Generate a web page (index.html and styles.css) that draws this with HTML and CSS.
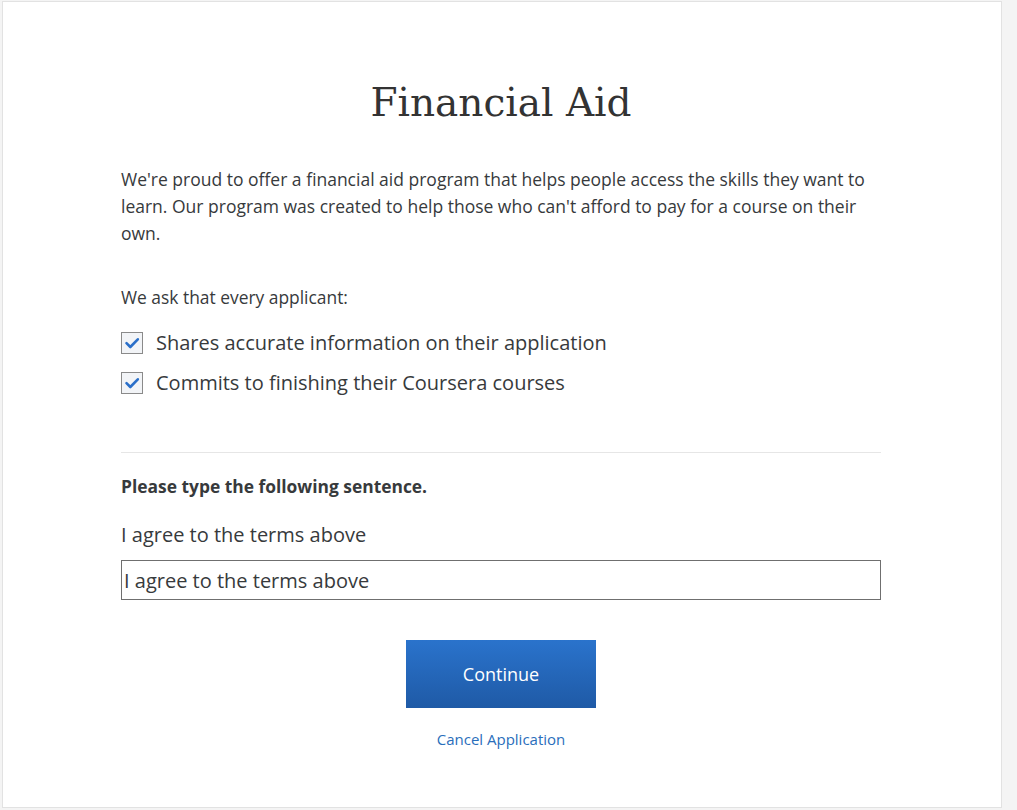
FILE: index.html
```html
<!DOCTYPE html>
<html lang="en">
<head>
<meta charset="utf-8">
<title>Financial Aid</title>
<link rel="stylesheet" href="styles.css">
</head>
<body>
<div class="page">
  <main class="card">
    <div class="content">
      <h1 class="title">Financial Aid</h1>
      <p class="intro">We're proud to offer a financial aid program that helps people access the skills they want to learn. Our program was created to help those who can't afford to pay for a course on their own.</p>
      <p class="ask">We ask that every applicant:</p>
      <ul class="checks">
        <li class="check-item">
          <span class="box"><svg viewBox="0 0 22 22" width="22" height="22"><path d="M5.5 11.2 L9.3 15 L16.8 7.3" fill="none" stroke="#2a6fc9" stroke-width="2.6" stroke-linecap="round" stroke-linejoin="round"/></svg></span>
          <span>Shares accurate information on their application</span>
        </li>
        <li class="check-item">
          <span class="box"><svg viewBox="0 0 22 22" width="22" height="22"><path d="M5.5 11.2 L9.3 15 L16.8 7.3" fill="none" stroke="#2a6fc9" stroke-width="2.6" stroke-linecap="round" stroke-linejoin="round"/></svg></span>
          <span>Commits to finishing their Coursera courses</span>
        </li>
      </ul>
      <hr class="divider">
      <p class="instruction">Please type the following sentence.</p>
      <p class="sentence">I agree to the terms above</p>
      <input class="field" type="text" value="I agree to the terms above">
      <div class="actions">
        <button class="continue" type="button">Continue</button>
        <a class="cancel" href="#">Cancel Application</a>
      </div>
    </div>
  </main>
</div>
</body>
</html>
```
FILE: styles.css
```css
html, body {
  margin: 0;
  padding: 0;
  background: #f4f4f4;
}
body {
  font-family: "Open Sans", "Liberation Sans", sans-serif;
  color: #373a3c;
}
.page {
  padding: 1px 15px 1px 2px;
  display: flex;
}
.card {
  width: 1000px;
  height: 807px;
  padding-right: 2px;
  background: #fff;
  border: 1px solid #e2e2e2;
  box-sizing: border-box;
  display: flex;
  justify-content: center;
}
.content {
  width: 760px;
  padding-top: 76px;
  display: flex;
  flex-direction: column;
}
.title {
  margin: 0;
  text-align: center;
  font-family: "DejaVu Serif", "Liberation Serif", serif;
  font-weight: 300;
  font-size: 39px;
  line-height: 50px;
  color: #333;
}
.intro {
  margin: 38px 0 0;
  font-size: 17.5px;
  line-height: 27px;
}
.ask {
  margin: 37px 0 0;
  font-size: 17.4px;
  line-height: 26px;
}
.checks {
  list-style: none;
  margin: 18px 0 0;
  padding: 0;
  display: flex;
  flex-direction: column;
  gap: 10px;
}
.check-item {
  display: flex;
  align-items: center;
  gap: 13px;
  font-size: 20px;
  line-height: 30px;
}
.box {
  width: 22px;
  height: 22px;
  box-sizing: border-box;
  border: 1px solid #8a8a8a;
  background: #f2f4f7;
  display: flex;
  align-items: center;
  justify-content: center;
}
.box svg {
  display: block;
  flex: none;
}
.divider {
  margin: 54px 0 0;
  border: 0;
  border-top: 1px solid #e6e6e6;
  height: 0;
}
.instruction {
  margin: 20px 0 0;
  font-size: 17.4px;
  font-weight: 700;
  line-height: 26px;
}
.sentence {
  margin: 21px 0 0;
  font-size: 20px;
  line-height: 30px;
}
.field {
  margin: 10px 0 0;
  height: 40px;
  box-sizing: border-box;
  border: 1px solid #6f6f6f;
  padding: 0 2px;
  font-family: "Open Sans", "Liberation Sans", sans-serif;
  font-size: 20px;
  color: #373a3c;
  outline: none;
}
.actions {
  margin-top: 40px;
  display: flex;
  flex-direction: column;
  align-items: center;
}
.continue {
  width: 190px;
  height: 68px;
  border: 0;
  background: linear-gradient(#2a73cc, #1f5aa6);
  color: #fff;
  font-family: "Open Sans", "Liberation Sans", sans-serif;
  font-size: 18px;
  cursor: pointer;
}
.cancel {
  margin-top: 21px;
  font-size: 15px;
  line-height: 20px;
  color: #2a6ebb;
  text-decoration: none;
}
```
